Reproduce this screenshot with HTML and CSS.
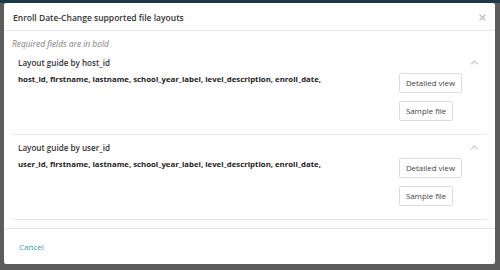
FILE: index.html
```html
<!DOCTYPE html>
<html lang="en">
<head>
  <meta charset="UTF-8" />
  <title>Enroll Date-Change supported file layouts</title>
  <link rel="stylesheet" href="styles.css">
</head>
<body>
  <div class="backdrop">
    <div class="modal">
      <div class="modal-header">
        <span class="modal-title">Enroll Date-Change supported file layouts</span>
        <svg class="close" width="7" height="7" viewBox="0 0 7 7">
          <path d="M1 1 L6 6 M6 1 L1 6" stroke="#c4c4c4" stroke-width="1.6" stroke-linecap="round"/>
        </svg>
      </div>

      <div class="modal-body">
        <p class="hint">Required fields are in bold</p>

        <div class="guide">
          <div class="guide-head">
            <span class="guide-title">Layout guide by host_id</span>
            <svg class="chevron" width="9" height="5" viewBox="0 0 9 5">
              <path d="M1 4.2 L4.5 1 L8 4.2" fill="none" stroke="#c8c8c8" stroke-width="1.2"/>
            </svg>
          </div>
          <div class="guide-content">
            <p class="fields">host_id, firstname, lastname, school_year_label, level_description, enroll_date,</p>
            <div class="actions">
              <button class="btn">Detailed view</button>
              <button class="btn">Sample file</button>
            </div>
          </div>
        </div>

        <div class="guide">
          <div class="guide-head">
            <span class="guide-title">Layout guide by user_id</span>
            <svg class="chevron" width="9" height="5" viewBox="0 0 9 5">
              <path d="M1 4.2 L4.5 1 L8 4.2" fill="none" stroke="#c8c8c8" stroke-width="1.2"/>
            </svg>
          </div>
          <div class="guide-content">
            <p class="fields">user_id, firstname, lastname, school_year_label, level_description, enroll_date,</p>
            <div class="actions">
              <button class="btn">Detailed view</button>
              <button class="btn">Sample file</button>
            </div>
          </div>
        </div>
      </div>

      <div class="modal-footer">
        <a class="cancel" href="#">Cancel</a>
      </div>
    </div>
  </div>
</body>
</html>
```

FILE: styles.css
```css
body {
  margin: 0;
  padding: 0;
  font-family: 'Open Sans', 'Liberation Sans', sans-serif;
  background: #5c5c5c;
  width: 500px;
  height: 270px;
  overflow: hidden;
}

.backdrop {
  height: 270px;
  padding: 3px 5px 0 4px;
  box-sizing: border-box;
  background: linear-gradient(to bottom, #1e3a44 0, #1e3a44 3px, #5c5c5c 3px);
}

.modal {
  background: #fff;
  height: 261px;
  border-radius: 2px;
  display: flex;
  flex-direction: column;
}

.modal-header {
  height: 27px;
  padding: 0 9px 0 9px;
  display: flex;
  align-items: center;
  justify-content: space-between;
  border-bottom: 1px solid #e6e6e6;
}

.modal-title {
  font-size: 8.5px;
  font-weight: 600;
  color: #333;
  padding-top: 1px;
}

.close {
  margin-top: 2px;
}

.modal-body {
  padding: 7px 8px 8px 8px;
}

.hint {
  margin: 0;
  font-size: 8.4px;
  line-height: 12px;
  font-style: italic;
  color: #808080;
}

.guide {
  padding: 6px 8px 13px 6px;
  border-bottom: 1px solid #e8e8e8;
}

.guide-head {
  height: 12px;
  display: flex;
  align-items: center;
  justify-content: space-between;
}

.guide-title {
  font-size: 8.1px;
  font-weight: 600;
  color: #333;
}

.guide-content {
  margin-top: 5px;
  display: flex;
  justify-content: space-between;
  padding-right: 17px;
}

.fields {
  margin: 0;
  font-size: 7.8px;
  line-height: 12px;
  font-weight: 700;
  color: #222;
}

.actions {
  display: flex;
  flex-direction: column;
  align-items: flex-start;
  gap: 8px;
}

.btn {
  height: 20px;
  padding: 0 6px;
  font-family: inherit;
  font-size: 7.9px;
  color: #444;
  background: #fff;
  border: 1px solid #dcdcdc;
  border-radius: 2px;
}

.modal-footer {
  flex: 1;
  display: flex;
  align-items: center;
  padding: 0 15px;
  border-top: 1px solid #e6e6e6;
}

.cancel {
  font-size: 8px;
  color: #3b8fc4;
  text-decoration: none;
}
```
